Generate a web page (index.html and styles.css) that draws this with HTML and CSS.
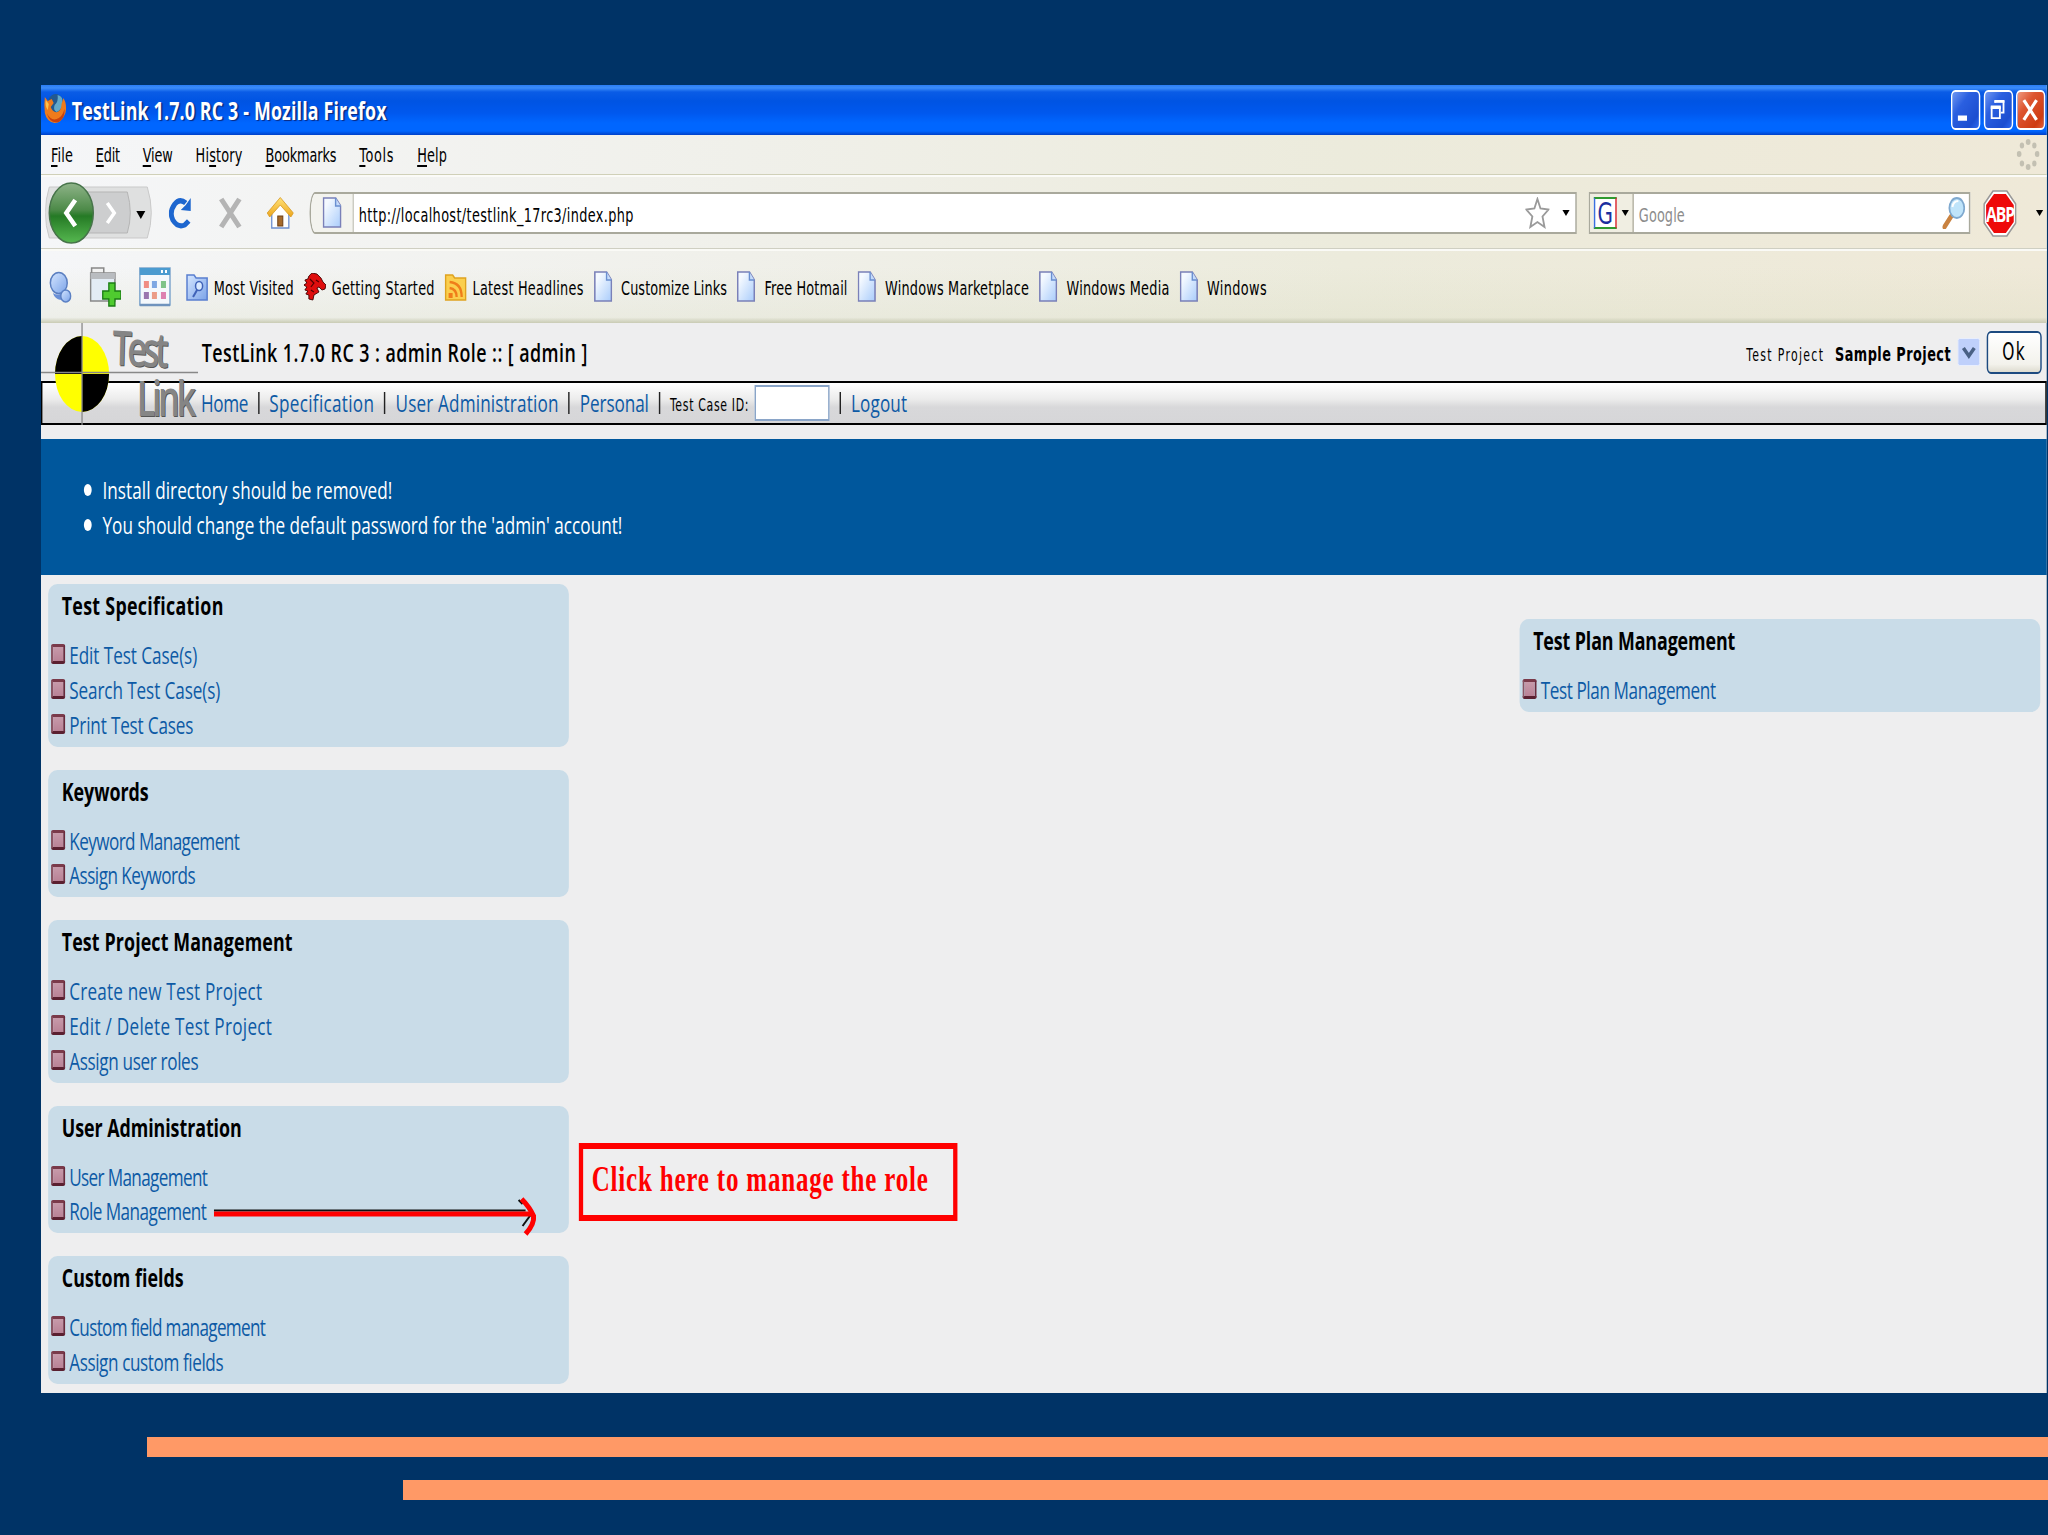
FILE: index.html
```html
<!DOCTYPE html>
<html lang="en">
<head>
    <meta charset="UTF-8">
    <title>TestLink 1.7.0 RC 3</title>
    <link rel="stylesheet" href="styles.css">
</head>
<body>
<svg width="0" height="0" class="defs">
    <defs>
        <linearGradient id="gDoc" x1="0" y1="0" x2="1" y2="1"><stop offset="0.2" stop-color="#f4f9ff"/><stop offset="1" stop-color="#a9ccfb"/></linearGradient>
        <linearGradient id="gBack" x1="0" y1="0" x2="0" y2="1"><stop offset="0" stop-color="#8fb489"/><stop offset="0.45" stop-color="#4c8a48"/><stop offset="0.55" stop-color="#257a25"/><stop offset="1" stop-color="#56b850"/></linearGradient>
        <linearGradient id="gRoof" x1="0" y1="0" x2="0" y2="1"><stop offset="0" stop-color="#ffe27a"/><stop offset="1" stop-color="#eda61c"/></linearGradient>
        <linearGradient id="gBlue" x1="0" y1="0" x2="1" y2="1"><stop offset="0" stop-color="#d5e6ff"/><stop offset="1" stop-color="#7ba3e8"/></linearGradient>
        <symbol id="doc" viewBox="0 0 19 31" preserveAspectRatio="none">
            <path d="M1 1H13L18 9V30H1Z" fill="url(#gDoc)" stroke="#7a80b8" stroke-width="1.6"/>
            <path d="M13 1V9H18" fill="#c5dcfb" stroke="#6a8fd0" stroke-width="1.4"/>
        </symbol>
    </defs>
</svg>

<div class="slide">
    <div class="window">
        <div class="titlebar">
            <svg width="33" height="32" viewBox="0 0 24 32" preserveAspectRatio="none">
                <ellipse cx="12" cy="15" rx="9" ry="13" fill="#23598f"/>
                <path d="M14 3Q20 4 19 12Q18 18 13 20Q9 18 11 13Q15 10 14 3Z" fill="#62a9c9"/>
                <path d="M1 5L4 9L8 7L10 11L7 15Q9 21 14 20Q18 18 18 12L20 6Q24 13 22 21Q18 31 11 31Q3 30 1 21Q0 13 1 5Z" fill="#ef7b1b"/>
                <path d="M3 21Q7 29 13 27Q19 25 21 17Q22 26 15 30Q6 32 3 21Z" fill="#c9410e"/>
                <path d="M2 8L5 12L4 18Q1 14 2 8Z" fill="#ffc14a"/>
            </svg>
            <span class="caption" data-w="315">TestLink 1.7.0 RC 3 - Mozilla Firefox</span>
            <div class="win-buttons">
                <span class="win-btn"><svg viewBox="0 0 29 40" preserveAspectRatio="none"><path d="M6 26H16V32H6Z" fill="#fff"/></svg></span>
                <span class="win-btn"><svg viewBox="0 0 29 40" preserveAspectRatio="none"><path d="M11 12V10.500H20V23H17" fill="none" stroke="#fff" stroke-width="2"/><path d="M10 9H21V12H10Z M6 15H17V19H6Z" fill="#fff"/><path d="M7 17H16V29H7Z" fill="none" stroke="#fff" stroke-width="2"/></svg></span>
                <span class="win-btn close"><svg viewBox="0 0 29 40" preserveAspectRatio="none"><path d="M7 9L21 31M21 9L7 31" stroke="#fff" stroke-width="3.500"/></svg></span>
            </div>
        </div>

        <div class="chrome">
            <div class="menubar">
                <span data-w="22"><u>F</u>ile</span>
                <span data-w="24"><u>E</u>dit</span>
                <span data-w="30"><u>V</u>iew</span>
                <span data-w="47">Hi<u>s</u>tory</span>
                <span data-w="71"><u>B</u>ookmarks</span>
                <span data-w="35"><u>T</u>ools</span>
                <span data-w="30"><u>H</u>elp</span>
                <svg class="throbber" width="32" height="32" viewBox="0 0 24 32" preserveAspectRatio="none" fill="#c3c0b2">
                    <ellipse cx="12" cy="3" rx="2.500" ry="3"/><ellipse cx="18.500" cy="6.500" rx="2.300" ry="3"/><ellipse cx="21.500" cy="15" rx="2.500" ry="3"/><ellipse cx="18.500" cy="24.500" rx="2.300" ry="3"/><ellipse cx="12" cy="28" rx="2.500" ry="3"/><ellipse cx="5.500" cy="24.500" rx="2.300" ry="3"/><ellipse cx="2.500" cy="15" rx="2.500" ry="3"/><ellipse cx="5.500" cy="6.500" rx="2.300" ry="3"/>
                </svg>
            </div>

            <div class="navbar">
                <svg class="backfwd" width="154" height="64" viewBox="0 0 110 64" preserveAspectRatio="none">
                    <path d="M4 6H102Q110 32 102 57H4Q-4 32 4 6Z" fill="#dfe0e0" stroke="#c9c9c9"/>
                    <path d="M40 11H82Q88 32 82 52H40Z" fill="#cdcecf" stroke="#b5b5b5"/>
                    <path d="M62 22L69 32L62 42" fill="none" stroke="#fff" stroke-width="3.500"/>
                    <ellipse cx="26" cy="32" rx="22" ry="30" fill="url(#gBack)" stroke="#47744a" stroke-width="1.500"/>
                    <path d="M30 19L21 32L30 45" fill="none" stroke="#fff" stroke-width="4.500"/>
                    <path d="M91 30H100L95.500 38Z" fill="#000"/>
                </svg>
                <svg class="reload" width="32" height="32" viewBox="0 0 23 32" preserveAspectRatio="none">
                    <path d="M17 6Q11 1 6 7Q0 15 4 23Q9 31 16 28L20 24" fill="none" stroke="#1d66cf" stroke-width="5"/>
                    <path d="M12 13L17 8L22 1V14Z" fill="#1d66cf"/>
                </svg>
                <svg class="stop" width="34" height="32" viewBox="0 0 24 32" preserveAspectRatio="none">
                    <path d="M3 2L21 30M21 2L3 30" stroke="#b4b4b4" stroke-width="5"/>
                </svg>
                <svg class="home" width="38" height="32" viewBox="0 0 27 32" preserveAspectRatio="none">
                    <path d="M5 14L13.500 5L22 14V31H5Z" fill="#fff" stroke="#6d8fd0" stroke-width="1.300"/>
                    <path d="M11 19H16V29H11Z" fill="#a56a2c" stroke="#6f3f14"/>
                    <path d="M0.500 16L13.500 0.500L26.500 16L24 20L13.500 8L3 20Z" fill="url(#gRoof)" stroke="#d79a23" stroke-width="0.800"/>
                </svg>
                <div class="urlbar">
                    <div class="identity"><svg width="27" height="31"><use href="#doc"/></svg></div>
                    <span class="url" data-w="275">http://localhost/testlink_17rc3/index.php</span>
                    <svg class="star" width="34" height="32" viewBox="0 0 24 32" preserveAspectRatio="none"><path d="M12 2L15 11.500L23 12.500L17 19.500L19 30L12 25L5 30L7 19.500L1 12.500L9 11.500Z" fill="#fff" stroke="#9a9a9a" stroke-width="1.800"/></svg>
                    <i class="drop"></i>
                </div>
                <div class="searchbar">
                    <div class="engine">
                        <span class="g-logo">G</span>
                        <i class="drop"></i>
                    </div>
                    <span class="placeholder" data-w="46">Google</span>
                    <svg class="glass" width="32" height="32" viewBox="0 0 23 32" preserveAspectRatio="none">
                        <path d="M9 19L2 30" stroke="#c98240" stroke-width="4.500" stroke-linecap="round"/>
                        <ellipse cx="14.500" cy="11" rx="7.500" ry="10" fill="#bfe4fa" stroke="#7fa9cf" stroke-width="1.800"/>
                        <path d="M10 10Q11 4 16 4" stroke="#fff" stroke-width="2" fill="none"/>
                    </svg>
                </div>
                <div class="abp">
                    <svg width="47" height="47" viewBox="0 0 34 47" preserveAspectRatio="none">
                        <path d="M10 1H24L33 14V33L24 46H10L1 33V14Z" fill="#fff" stroke="#999" stroke-width="1.600"/>
                        <path d="M11 4H23L31 15V32L23 43H11L3 32V15Z" fill="#ee0a0a"/>
                    </svg>
                    <span data-w="28">ABP</span>
                </div>
                <i class="drop end"></i>
            </div>

            <div class="bookmarks">
                <svg class="b1" width="32" height="32" viewBox="0 0 23 32" preserveAspectRatio="none">
                    <ellipse cx="10" cy="12" rx="8.500" ry="10.500" fill="url(#gBlue)" stroke="#5b7fc0" stroke-width="1.500"/>
                    <path d="M4 22Q9 25 13 22L12 29Q6 28 4 22Z" fill="#6a8fd6"/>
                    <ellipse cx="17" cy="25" rx="5" ry="6" fill="url(#gBlue)" stroke="#5b80c4" stroke-width="1.500"/>
                </svg>
                <svg class="b2" width="44" height="40" viewBox="0 0 31 40" preserveAspectRatio="none">
                    <path d="M2 6V1H14V6" fill="#f2f2f2" stroke="#888" stroke-width="1.500"/>
                    <path d="M1 6H25V34H1Z" fill="#e3ecf5" stroke="#888" stroke-width="1.500"/>
                    <path d="M1 6H25V12H1Z" fill="#b9bcc0"/>
                    <path d="M19 16H25V24H31V32H25V39H19V32H13V24H19Z" fill="#4fcb2f" stroke="#1b7d15" stroke-width="1.300"/>
                </svg>
                <svg class="b3" width="45" height="40" viewBox="0 0 32 40" preserveAspectRatio="none">
                    <path d="M1 1H31V38H1Z" fill="#f4f8fc" stroke="#7fa6cc" stroke-width="1.500"/><path d="M1 1H31V8H1Z" fill="#4b9bd0"/>
                    <path d="M22 3H24V6H22Z M26 3H28V6H26Z" fill="#fff"/>
                    <path d="M5 14H10V21H5Z" fill="#f08d83"/><path d="M13 14H18V21H13Z" fill="#7ea7e3"/><path d="M22 14H27V21H22Z" fill="#7fc389"/>
                    <path d="M5 25H10V32H5Z" fill="#9a76ae"/><path d="M13 25H18V32H13Z" fill="#eb9c88"/><path d="M22 25H27V32H22Z" fill="#dd80b0"/>
                    <path d="M1 38H31" stroke="#6f93bd" stroke-width="2.500"/>
                </svg>
                <a class="bm"><svg width="31" height="28" viewBox="0 0 22 28" preserveAspectRatio="none"><path d="M1 27V2H8L10 5H21V27Z" fill="url(#gBlue)" stroke="#5a7fd0" stroke-width="1.500"/><ellipse cx="13" cy="13" rx="3.500" ry="4.500" fill="#d9e9ff" stroke="#3f62b8" stroke-width="1.500"/><path d="M11 17L7 24" stroke="#3f62b8" stroke-width="2"/></svg><span data-w="80">Most Visited</span></a>
                <a class="bm"><svg width="31" height="28" viewBox="0 0 22 28" preserveAspectRatio="none"><path d="M5 3L8 0L13 1L17 5L19 9L22 12L21 16L18 17L15 14L13 15L15 19L10 22L9 27L5 26L5 22L2 21L4 18L1 17L3 14L0 12L3 10L1 7L4 6Z" fill="#df0d0d" stroke="#400" stroke-width="0.900"/><path d="M6 6L10 10L7 14M12 7L15 9M7 17L10 19" stroke="#500" stroke-width="1.200" fill="none"/></svg><span data-w="103">Getting Started</span></a>
                <a class="bm"><svg width="31" height="28" viewBox="0 0 22 28" preserveAspectRatio="none"><path d="M1 27V2H8L10 5H21V27Z" fill="#fbcf4e" stroke="#dfa31f" stroke-width="1.500"/><path d="M5 9Q17 10 17 24M5 15Q12 16 12 24" fill="none" stroke="#ef7d1a" stroke-width="2.300"/><path d="M4 20H8V25H4Z" fill="#ef7d1a"/></svg><span data-w="111">Latest Headlines</span></a>
                <a class="bm"><svg width="26" height="31"><use href="#doc"/></svg><span data-w="106">Customize Links</span></a>
                <a class="bm"><svg width="26" height="31"><use href="#doc"/></svg><span data-w="83">Free Hotmail</span></a>
                <a class="bm"><svg width="26" height="31"><use href="#doc"/></svg><span data-w="144">Windows Marketplace</span></a>
                <a class="bm"><svg width="26" height="31"><use href="#doc"/></svg><span data-w="103">Windows Media</span></a>
                <a class="bm"><svg width="26" height="31"><use href="#doc"/></svg><span data-w="60">Windows</span></a>
            </div>
        </div>

        <div class="page">
            <div class="header">
                <div class="logo">
                    <svg width="220" height="102" viewBox="0 0 157 102" preserveAspectRatio="none">
                        <ellipse cx="41" cy="51" rx="27" ry="38" fill="#ff0"/>
                        <path d="M41 51V13A27 38 0 0 0 14 51Z M41 51V89A27 38 0 0 0 68 51Z" fill="#000"/>
                        <path d="M41 0V102M0 49.500H157" stroke="#888" stroke-width="1.300"/>
                    </svg>
                    <span class="logo-test" data-w="53">Test</span>
                    <span class="logo-link" data-w="56">Link</span>
                </div>
                <span class="product" data-w="386">TestLink 1.7.0 RC 3 : admin Role :: [ admin ]</span>
                <div class="project">
                    <span class="small" data-w="78">Test Project</span>
                    <span class="selected" data-w="116">Sample Project</span>
                    <svg width="32" height="28" viewBox="0 0 23 28" preserveAspectRatio="none"><rect x="0.500" y="0.500" width="22" height="27" rx="2" fill="#bfd0fb" stroke="#e8eefe"/><path d="M6 10L11.500 18L17 10" fill="none" stroke="#4a6185" stroke-width="3.500"/></svg>
                    <button class="ok"><span data-w="24">Ok</span></button>
                </div>
            </div>
            <div class="menu">
                <a data-w="47">Home</a><i></i>
                <a data-w="105">Specification</a><i></i>
                <a data-w="163">User Administration</a><i></i>
                <a data-w="69">Personal</a><i></i>
                <span class="small" data-w="79">Test Case ID:</span>
                <input type="text"><i></i>
                <a data-w="56">Logout</a>
            </div>
            <ul class="notes">
                <li><span data-w="290">Install directory should be removed!</span></li>
                <li><span data-w="520">You should change the default password for the 'admin' account!</span></li>
            </ul>
            <div class="content">
                <div class="column">
                    <div class="panel">
                        <h3><span data-w="162">Test Specification</span></h3>
                        <a><b></b><span data-w="128">Edit Test Case(s)</span></a>
                        <a><b></b><span data-w="151">Search Test Case(s)</span></a>
                        <a><b></b><span data-w="124">Print Test Cases</span></a>
                    </div>
                    <div class="panel">
                        <h3><span data-w="87">Keywords</span></h3>
                        <a><b></b><span data-w="170">Keyword Management</span></a>
                        <a><b></b><span data-w="126">Assign Keywords</span></a>
                    </div>
                    <div class="panel">
                        <h3><span data-w="231">Test Project Management</span></h3>
                        <a><b></b><span data-w="193">Create new Test Project</span></a>
                        <a><b></b><span data-w="203">Edit / Delete Test Project</span></a>
                        <a><b></b><span data-w="129">Assign user roles</span></a>
                    </div>
                    <div class="panel">
                        <h3><span data-w="180">User Administration</span></h3>
                        <a><b></b><span data-w="138">User Management</span></a>
                        <a><b></b><span data-w="137">Role Management</span></a>
                    </div>
                    <div class="panel">
                        <h3><span data-w="122">Custom fields</span></h3>
                        <a><b></b><span data-w="196">Custom field management</span></a>
                        <a><b></b><span data-w="154">Assign custom fields</span></a>
                    </div>
                </div>
                <div class="column right">
                    <div class="panel">
                        <h3><span data-w="202">Test Plan Management</span></h3>
                        <a><b></b><span data-w="175">Test Plan Management</span></a>
                    </div>
                </div>
                <svg class="arrow" width="456" height="42" viewBox="0 0 326 42" preserveAspectRatio="none">
                    <path d="M0 14.500H312M305 4L309 8M309 30L317 19" fill="none" stroke="#111" stroke-width="2"/>
                    <path d="M0 18H319" stroke="#f00" stroke-width="5"/>
                    <path d="M308 3Q316 11 320 20Q321 28 312 38" fill="none" stroke="#f00" stroke-width="5"/>
                </svg>
                <div class="callout"><span data-w="337">Click here to manage the role</span></div>
            </div>
        </div>
    </div>
    <div class="stripe one"></div>
    <div class="stripe two"></div>
</div>
<script>
    // the window is squeezed to 1/1.4 of its width, so label widths are stretched back by 1.4
    document.querySelectorAll('[data-w]').forEach(function (el) {
        var diff = el.dataset.w * 1.4 - el.getBoundingClientRect().width * 1.4;
        el.style.letterSpacing = (diff / el.textContent.length) + 'px';
    });
</script>
</body>
</html>
```

FILE: styles.css
```css
body {
    margin: 0;
    overflow: hidden;
    font-family: Tahoma, "DejaVu Sans Condensed", "DejaVu Sans", sans-serif;
}
.defs {
    position: absolute;
}
.slide {
    width: 2048px;
    height: 1535px;
    padding-top: 85px;
    box-sizing: border-box;
    background: #003366;
    overflow: hidden;
}
/* everything inside is laid out 1.4 times wider than shown */
.window {
    width: 2808px;
    height: 1308px;
    margin-left: 41px;
    margin-right: -900px;
    transform: scaleX(0.7142857);
    transform-origin: 0 0;
    background: #eeeeef;
}
.window svg {
    flex: none;
    display: block;
}
span[data-w],
a[data-w] {
    display: inline-block;
    white-space: pre;
    flex: none;
}

/* title bar */
.titlebar {
    display: flex;
    align-items: center;
    height: 50px;
    box-sizing: border-box;
    padding: 0 2px 0 4px;
    background: linear-gradient(#2a7df5 0, #3b8cf8 3px, #0a5ce6 7px, #0054e3 16px, #0058ee 28px, #0066ff 38px, #0066ff 46px, #0040c8 50px);
}
.titlebar > svg {
    margin-top: -4px;
}
.caption {
    margin-left: 6px;
    margin-top: -1px;
    font-family: "Trebuchet MS", "Open Sans", sans-serif;
    font-size: 25px;
    line-height: 30px;
    font-weight: bold;
    color: #fff;
    text-shadow: 2px 1px 1px #0a2a80;
}
.win-buttons {
    display: flex;
    gap: 4.5px;
    margin-left: auto;
    margin-top: -1px;
}
.win-btn {
    width: 41px;
    height: 40px;
    box-sizing: border-box;
    border: 2px solid #fff;
    border-radius: 6px;
    background: linear-gradient(135deg, #6f97f2, #2a5fe0 35%, #1c4ed0 80%, #2f6af0);
}
.win-btn.close {
    background: linear-gradient(135deg, #ef9a80, #dd5530 35%, #cf3c12 80%, #e0603a);
}
.win-btn svg {
    width: 37px;
    height: 36px;
}

/* browser toolbars */
.chrome {
    height: 188px;
    background: linear-gradient(rgba(236, 233, 216, 0) 70%, rgba(215, 218, 190, 0.25) 97%, #c9cbb4 100%), linear-gradient(to right, #f5f6f8 0, #f0f0ea 35%, #ecebdc 65%, #efe9d8 100%);
    font-size: 20px;
}
.menubar {
    display: flex;
    align-items: center;
    gap: 32px;
    height: 40px;
    box-sizing: border-box;
    padding: 0 10px 0 14px;
    border-bottom: 1px solid #d0d0b8;
}
.menubar u {
    text-underline-offset: 3px;
}
.throbber {
    margin-left: auto;
}
.navbar {
    display: flex;
    align-items: center;
    height: 74px;
    box-sizing: border-box;
    padding: 1px 5px 0 6px;
    border-top: 2px solid #fbfbf8;
    border-bottom: 1px solid #cfcfc2;
}
.reload {
    margin-left: 19px;
}
.stop {
    margin-left: 37px;
}
.home {
    margin-left: 34px;
}
.urlbar,
.searchbar {
    display: flex;
    align-items: center;
    height: 42px;
    box-sizing: border-box;
    border: 2px solid #a9a99c;
    background: #fff;
}
.urlbar {
    width: 1774px;
    margin-left: 22px;
    border-radius: 8px 0 0 8px / 20px 0 0 20px;
}
.identity {
    width: 60px;
    height: 38px;
    box-sizing: border-box;
    padding: 3px 0 0 16px;
    border-right: 2px solid #bcbcb0;
    border-radius: 6px 0 0 6px / 18px 0 0 18px;
    background: #f3f3ee;
}
.url {
    margin-left: 7px;
    margin-top: 4px;
}
.star {
    margin-left: auto;
}
.drop {
    border: 5px solid transparent;
    border-top: 6px solid #000;
    border-bottom: 0;
}
.urlbar .drop {
    margin: 0 8px 0 18px;
}
.searchbar {
    width: 534px;
    margin-left: 17px;
}
.engine {
    display: flex;
    align-items: center;
    gap: 7px;
    width: 61px;
    height: 38px;
    box-sizing: border-box;
    padding-left: 5px;
    border-right: 2px solid #b5b3a5;
    background: #f0eee2;
}
.g-logo {
    width: 32px;
    height: 32px;
    box-sizing: border-box;
    border: 2px solid;
    border-color: #2f9a2f #d8232a #2f9a2f #3a6fe0;
    background: #fff;
    font-size: 31px;
    line-height: 28px;
    text-align: center;
    color: #1b2f9e;
}
.placeholder {
    margin-left: 7px;
    margin-top: 4px;
    color: #8c8c8c;
}
.glass {
    margin-left: auto;
    margin-right: 5px;
}
.abp {
    position: relative;
    margin-left: 18px;
}
.abp span {
    position: absolute;
    left: 4px;
    top: 10px;
    font: bold 22px/26px "Liberation Sans Narrow", "Open Sans", sans-serif;
    color: #fff;
}
.drop.end {
    margin-left: auto;
}
.bookmarks {
    display: flex;
    align-items: center;
    height: 74px;
    box-sizing: border-box;
    padding: 0 0 1px 11px;
    border-top: 2px solid #fafaf6;
}
.b2 {
    margin-left: 25px;
}
.b3 {
    margin-left: 25px;
    margin-right: 21px;
}
.bm {
    display: flex;
    align-items: center;
    margin-right: 14px;
}
.bm span {
    margin-left: 8px;
    margin-top: 2px;
}
.bm svg[width="26"] + span {
    margin-left: 12.5px;
}

/* TestLink page */
.page {
    font-family: "Trebuchet MS", "Open Sans", sans-serif;
    font-size: 24px;
}
.page a {
    color: #0d5aa5;
}
.header {
    position: relative;
    display: flex;
    align-items: center;
    height: 58px;
    padding: 0 7px 0 225px;
}
.logo {
    position: absolute;
    left: 0;
    top: 0;
    font-size: 48px;
    font-weight: 600;
    line-height: 44px;
    color: #858585;
    text-shadow: 1px 1px 0 #555;
}
.logo-test,
.logo-link {
    position: absolute;
}
.logo-test {
    left: 100px;
    top: 3px;
    transform: rotate(2deg);
}
.logo-link {
    left: 134px;
    top: 53px;
}
.product {
    font-size: 25px;
    font-weight: 600;
    line-height: 34px;
}
.project {
    display: flex;
    align-items: center;
    margin-left: auto;
}
.small {
    margin-top: 5px;
    font-family: Tahoma, "DejaVu Sans Condensed", sans-serif;
    font-size: 17px;
}
.selected {
    margin: 4px 9px 0 15px;
    font-family: Tahoma, "DejaVu Sans Condensed", sans-serif;
    font-size: 20px;
    font-weight: bold;
}
.ok {
    width: 77px;
    height: 43px;
    margin-left: 9px;
    padding: 0;
    border: 2px solid #1c4a80;
    border-radius: 6px;
    background: linear-gradient(#fff, #f3f2ec 80%, #dedcd0);
    font-family: Tahoma, "DejaVu Sans Condensed", sans-serif;
    font-size: 24px;
}
.menu {
    display: flex;
    align-items: center;
    height: 44px;
    box-sizing: border-box;
    padding: 0 0 2px 222px;
    border: 2px solid #000;
    background: linear-gradient(#fff, #ececec 40%, #d8d8da 60%, #d6d6d8);
}
.menu i {
    width: 2px;
    height: 22px;
    margin: 2px 13.9px 0;
    background: #222;
}
.menu .small {
    margin-top: 6px;
}
.menu input {
    width: 105px;
    height: 36px;
    box-sizing: border-box;
    margin: 2px 0 0 8px;
    border: 2px solid #8aa5c8;
    background: #fff;
}
.notes {
    height: 136px;
    box-sizing: border-box;
    margin: 14px 0 0;
    padding: 33px 0 0 86px;
    background: #00579c;
    color: #fff;
    line-height: 35px;
    list-style: none;
}
.notes li {
    display: flex;
    align-items: center;
    height: 35px;
}
.notes li::before {
    content: "";
    width: 11px;
    height: 12px;
    margin: 0 15px 0 -26px;
    border-radius: 50%;
    background: #fff;
}
.content {
    position: relative;
    display: flex;
    justify-content: space-between;
    align-items: flex-start;
    padding: 9px 9px 0 10px;
}
.column {
    width: 729px;
    display: flex;
    flex-direction: column;
    gap: 23px;
}
.column.right {
    margin-top: 35px;
}
.panel {
    padding-bottom: 5px;
    border-radius: 13px / 10px;
    background: #c9dce8;
}
.panel h3 {
    margin: 0 0 11px;
    padding-left: 19px;
    font-size: 25px;
    font-weight: bold;
    line-height: 42px;
}
.panel a {
    display: flex;
    align-items: center;
    height: 34.9px;
    padding-left: 4px;
    line-height: 35px;
}
.panel:not(:first-child) a {
    height: 34.8px;
}
.panel b {
    width: 20px;
    height: 20px;
    box-sizing: border-box;
    margin: -1px 5.5px 0 0;
    border: 3px solid;
    border-color: #7a3a4a #6a2a3c #5a2030 #8a5564;
    border-radius: 3px;
    background: linear-gradient(#c79aaa, #b98296);
}

/* annotations */
.arrow {
    position: absolute;
    left: 242px;
    top: 621px;
}
.callout {
    position: absolute;
    left: 753px;
    top: 568px;
    width: 530px;
    height: 78px;
    box-sizing: border-box;
    padding-left: 12px;
    border: 6px solid #f00;
    font-family: "Liberation Serif", "Times New Roman", serif;
    font-size: 35px;
    font-weight: bold;
    line-height: 62px;
    color: #f00;
}

/* slide decoration */
.stripe {
    height: 20px;
    background: #ff9966;
}
.stripe.one {
    margin: 44px 0 0 147px;
}
.stripe.two {
    margin: 23px 0 0 403px;
}
```
